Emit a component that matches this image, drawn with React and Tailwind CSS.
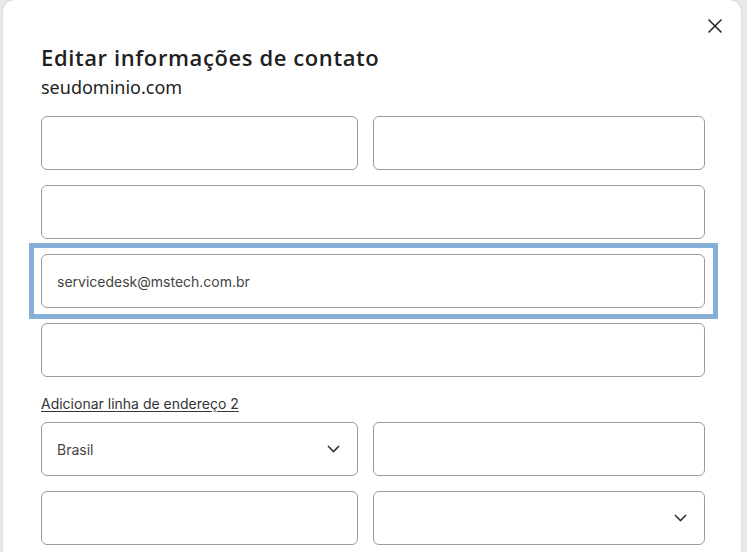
import React from "react";

const Field = ({ value, select, focused }) => (
  <div className="relative">
    <div className="h-[54px] rounded-[6px] border border-[#9b9b9b] bg-white flex items-center px-[15px] text-[14px] text-[#444] font-['Inter',sans-serif]">
      <span className="flex-1">{value}</span>
      {select && (
        <svg className="w-[13px] h-[8px] mr-[2px]" viewBox="0 0 13 8" fill="none" stroke="#333" strokeWidth="1.6">
          <path d="M1 1l5.5 5.5L12 1" />
        </svg>
      )}
    </div>
    {focused && (
      <div className="pointer-events-none absolute -left-[12px] -right-[13px] -top-[11px] -bottom-[11px] border-[5px] border-[#85afd8]" />
    )}
  </div>
);

const App = () => {
  return (
    <div className="h-[552px] w-[747px] overflow-hidden bg-[#e8e8e8] pl-[3px] pr-[6px]">
      <div className="relative h-full bg-white rounded-t-[12px] pl-[38px] pr-[36px] pt-[43px] shadow-[0_0_2px_rgba(0,0,0,0.15)]">
        <button className="absolute top-[17px] right-[17px] w-[18px] h-[18px] flex items-center justify-center">
          <svg viewBox="0 0 16 16" className="w-[16px] h-[16px]" fill="none" stroke="#222" strokeWidth="1.5">
            <path d="M1.5 1.5l13 13M14.5 1.5l-13 13" />
          </svg>
        </button>
        <h1 className="text-[22px] leading-[28px] font-semibold tracking-[0.6px] text-[#1f1f1f] font-['Open_Sans',sans-serif]">
          Editar informações de contato
        </h1>
        <p className="mt-[4px] text-[18px] leading-[24px] text-[#1f1f1f] font-['Noto_Sans',sans-serif]">
          seudominio.com
        </p>
        <div className="mt-[17px] flex flex-col gap-[15px]">
          <div className="grid grid-cols-[317px_1fr] gap-[15px]">
            <Field />
            <Field />
          </div>
          <Field />
          <Field value="servicedesk@mstech.com.br" focused />
          <Field />
        </div>
        <a className="mt-[17px] block text-[14px] leading-[20px] text-[#333] underline underline-offset-[2px] font-['Inter',sans-serif]">
          Adicionar linha de endereço 2
        </a>
        <div className="mt-[8px] grid grid-cols-[317px_1fr] gap-[15px] gap-y-[15px]">
          <Field value="Brasil" select />
          <Field />
          <Field />
          <Field select />
        </div>
      </div>
    </div>
  );
};

export default App;
